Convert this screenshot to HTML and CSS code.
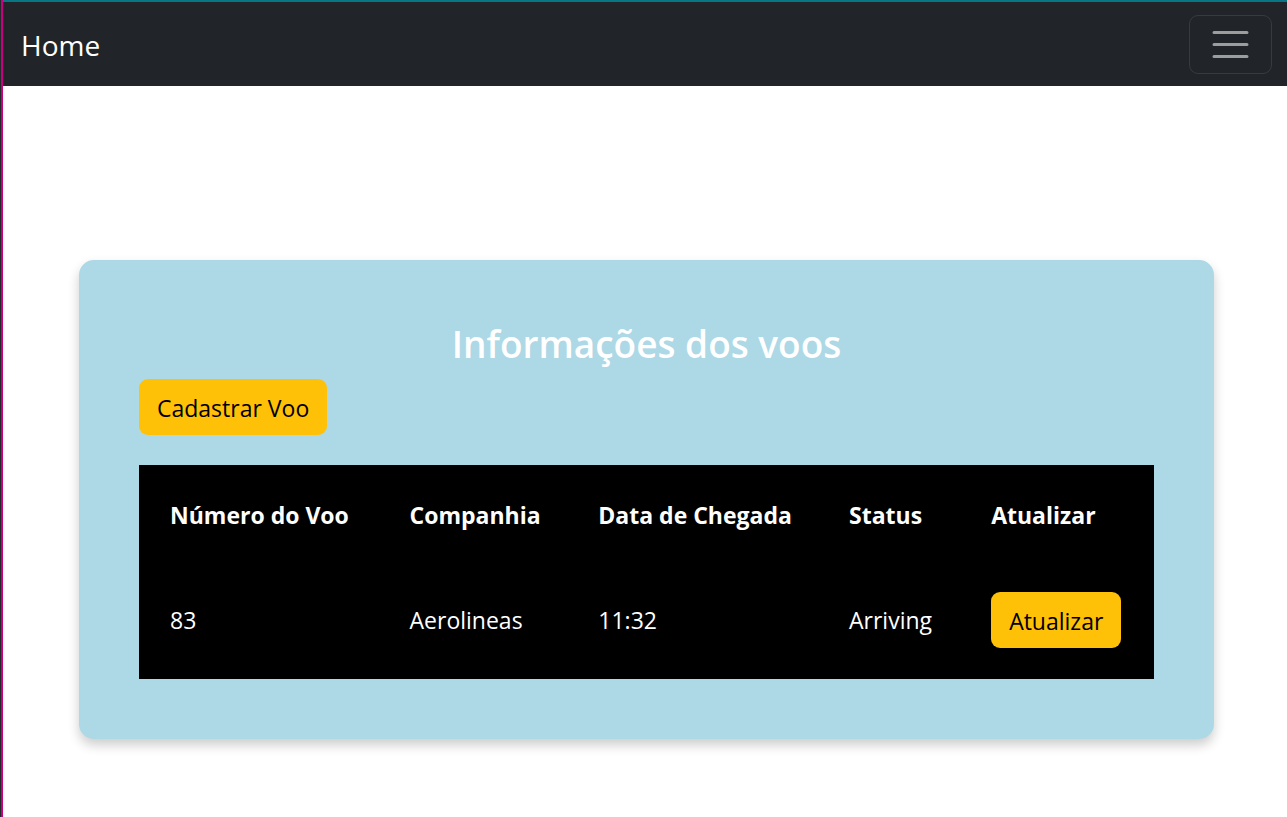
FILE: index.html
```html
<!DOCTYPE html>
<html lang="pt-BR">
<head>
<meta charset="utf-8">
<meta name="viewport" content="width=device-width, initial-scale=1">
<title>Informações dos voos</title>
<link rel="stylesheet" href="styles.css">
</head>
<body>
<div class="page">
  <nav class="navbar">
    <a class="navbar-brand" href="#">Home</a>
    <button class="navbar-toggler" type="button" aria-label="Abrir menu">
      <svg class="toggler-icon" viewBox="0 0 30 30" aria-hidden="true"><path d="M4 7h22M4 15h22M4 23h22" fill="none" stroke="currentColor" stroke-width="2" stroke-linecap="round"/></svg>
    </button>
  </nav>
  <main class="card">
    <h1 class="title">Informações dos voos</h1>
    <button class="btn" type="button">Cadastrar Voo</button>
    <table class="flights">
      <colgroup><col class="c-number"><col class="c-company"><col class="c-arrival"><col class="c-status"><col class="c-update"></colgroup>
      <thead>
        <tr><th scope="col">Número do Voo</th><th scope="col">Companhia</th><th scope="col">Data de Chegada</th><th scope="col">Status</th><th scope="col">Atualizar</th></tr>
      </thead>
      <tbody>
        <tr><td>83</td><td>Aerolineas</td><td>11:32</td><td>Arriving</td><td><button class="btn" type="button">Atualizar</button></td></tr>
      </tbody>
    </table>
  </main>
</div>
</body>
</html>
```
FILE: styles.css
```css
* { box-sizing: border-box; }
body {
  margin: 0;
  border-left: 1px solid #24282d;
  background: #fff;
  color: #212529;
  font: 23px/36px "Open Sans", "Noto Sans", sans-serif;
}
.page {
  min-height: 100vh;
  border-left: 2px solid #c6007e;
}
.navbar {
  display: flex;
  align-items: center;
  justify-content: space-between;
  padding: 13px 15px 12px 18px;
  border-top: 2px solid #087785;
  background: #212529;
}
.navbar-brand {
  color: #fff;
  font-size: 28px;
  text-decoration: none;
}
.navbar-toggler {
  display: flex;
  padding: 6px 18px;
  border: 1px solid #373b3e;
  border-radius: 9px;
  background: transparent;
  color: #9b9d9f;
}
.toggler-icon { width: 45px; height: 45px; }
.card {
  margin: 174px 73px 78px 76px;
  padding: 60px;
  border-radius: 15px;
  background: #add8e6;
  box-shadow: 0 6px 12px rgba(0, 0, 0, .2);
}
.title {
  margin: 0 0 11px;
  color: #fff;
  font-size: 37px;
  font-weight: 600;
  line-height: 48px;
  text-align: center;
}
.btn {
  display: block;
  padding: 11px 18px 9px;
  border: 0;
  border-radius: 9px;
  background: #ffc107;
  color: #000;
  font: inherit;
  white-space: nowrap;
}
.flights {
  width: 100%;
  margin-top: 30px;
  border-collapse: collapse;
  background: #000;
  color: #fff;
  text-align: left;
}
.flights th, .flights td {
  padding: 30px 20px 31px 31px;
  white-space: nowrap;
}
.flights th { padding: 32px 20px 29px 31px; }
.flights td:last-child, .flights th:last-child { padding-left: 30px; }
.c-number { width: 23.6%; }
.c-company { width: 18.6%; }
.c-arrival { width: 24.7%; }
.c-status { width: 14.1%; }
.c-update { width: 19%; }
```
